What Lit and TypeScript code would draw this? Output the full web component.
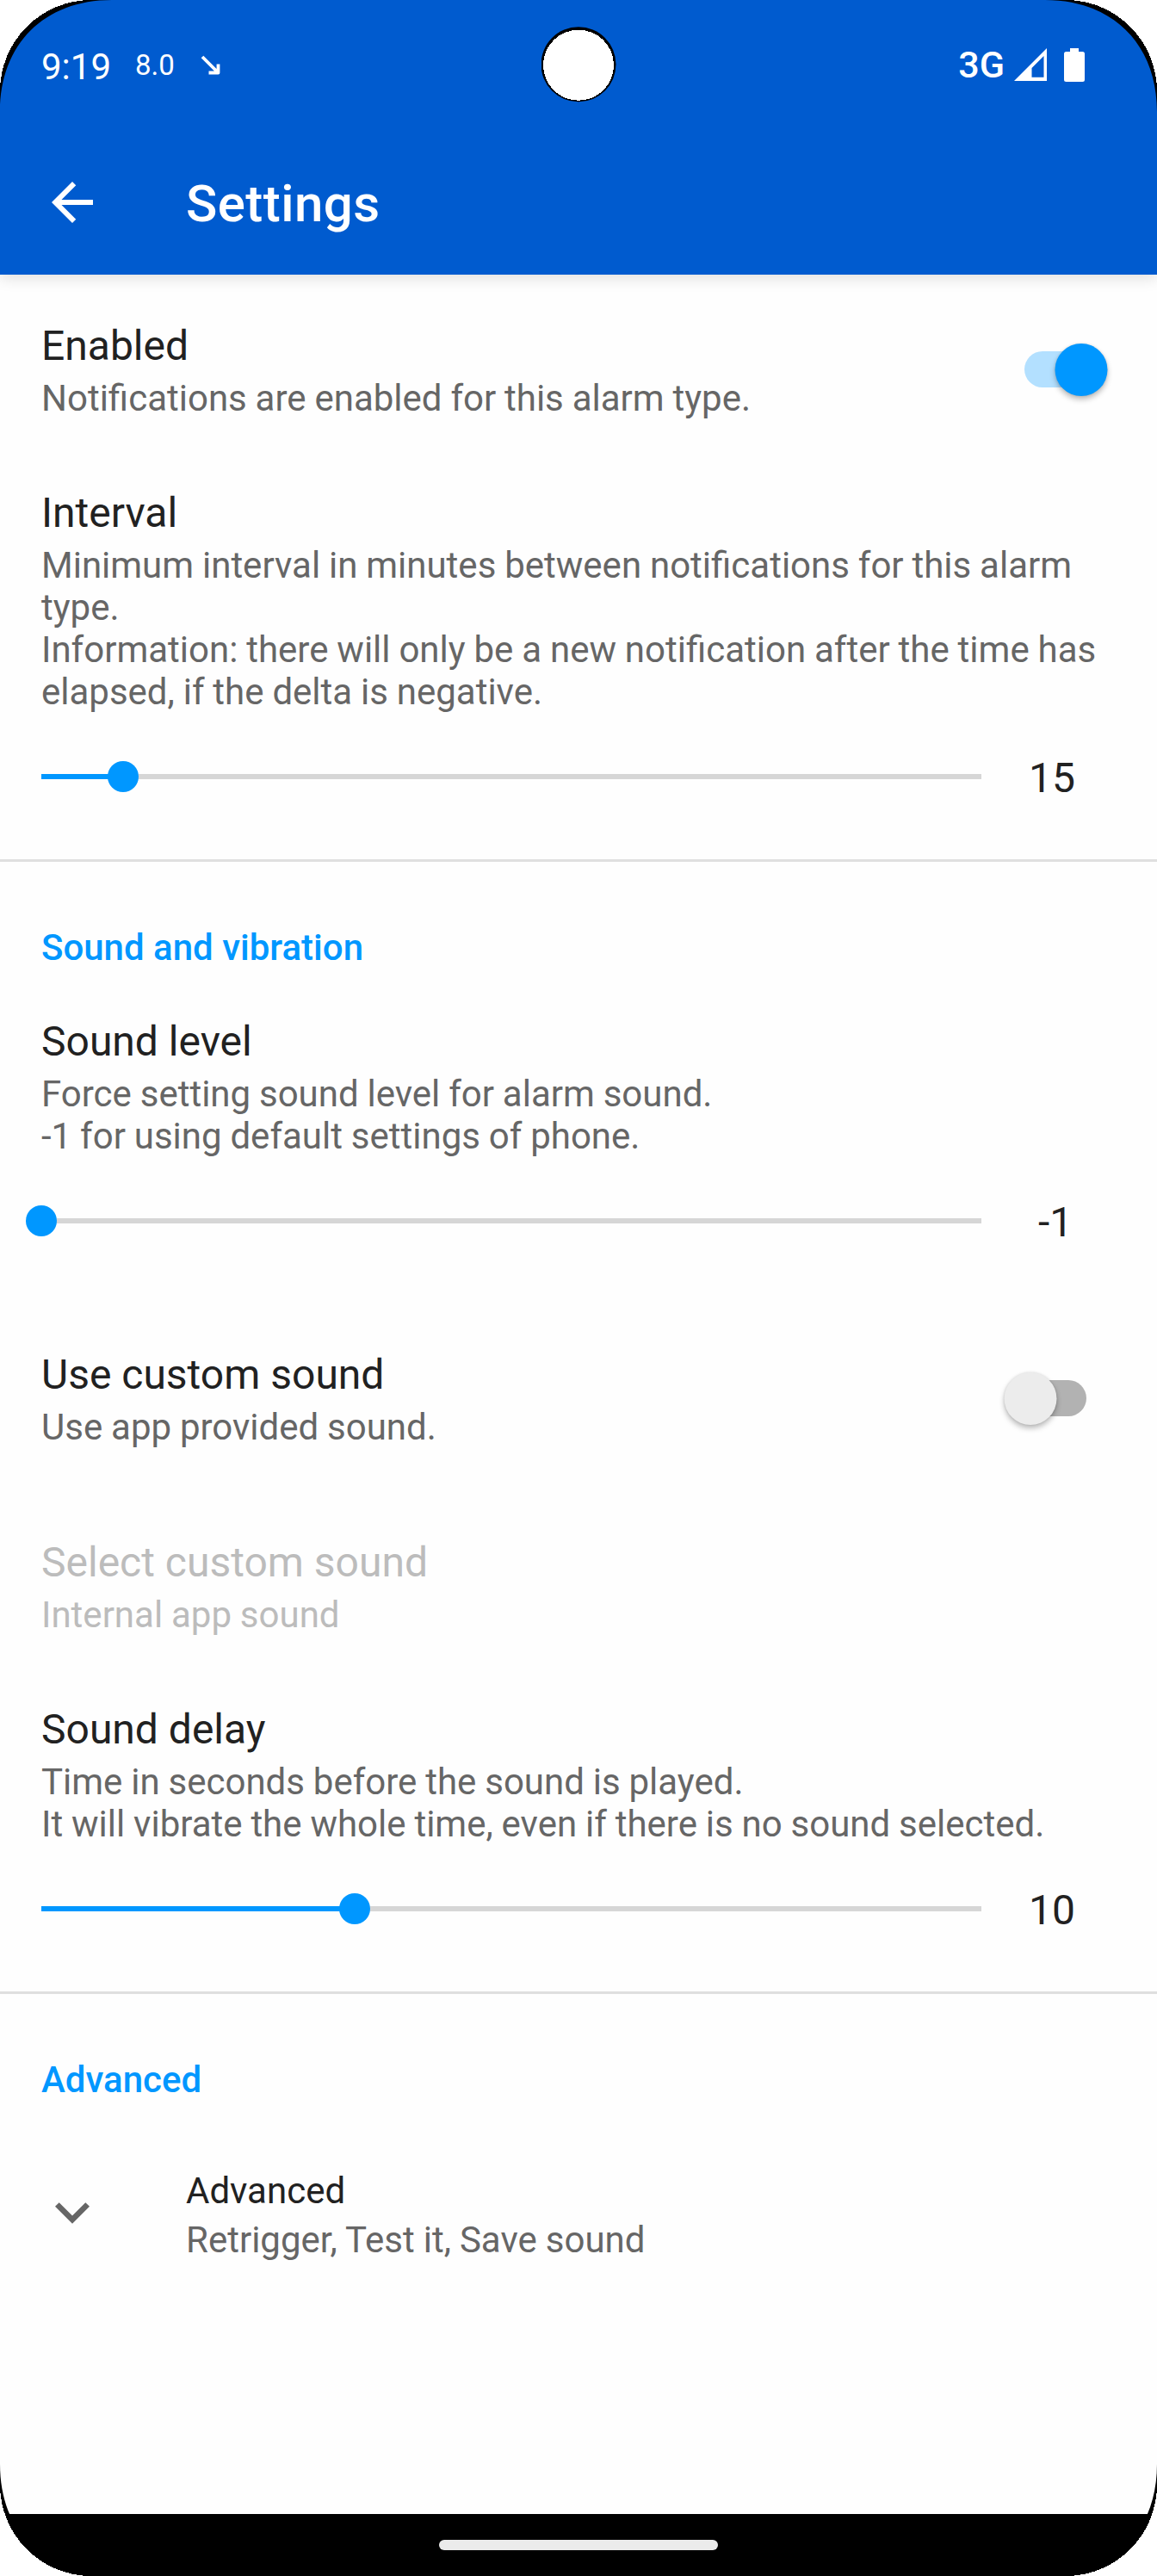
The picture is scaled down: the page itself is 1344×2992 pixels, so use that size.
import { LitElement, html, css } from "lit";
import { customElement, property } from "lit/decorators.js";
import { classMap } from "lit/directives/class-map.js";

@customElement("status-bar")
class StatusBar extends LitElement {
  static styles = css`
    :host { display: block; height: 151px; color: #fff; }
    .bar { box-sizing: border-box; height: 151px; padding: 0 84px 0 48px; display: flex; justify-content: space-between; }
    .side { display: flex; }
    .time { font-size: 42px; line-height: 49px; padding-top: 53px; width: 109px; }
    .num { font-size: 33px; line-height: 39px; padding-top: 56px; width: 76px; }
    .trend { padding-top: 64px; }
    .net { font-size: 43px; line-height: 49px; font-weight: 500; padding-top: 51px; margin-right: 11px; }
    .signal { padding-top: 56px; margin-right: 20px; }
    .battery { padding-top: 56px; }
    svg { display: block; }
  `;
  render() {
    return html`
      <div class="bar">
        <div class="side">
          <span class="time">9:19</span>
          <span class="num">8.0</span>
          <span class="trend">
            <svg width="24" height="24" viewBox="0 0 24 24" fill="none" stroke="#fff" stroke-width="3.8">
              <path d="M2 2 L20.5 20.5 M20.5 10.5 V20.5 H9.5" stroke-linejoin="round" />
            </svg>
          </span>
        </div>
        <div class="side">
          <span class="net">3G</span>
          <span class="signal">
            <svg width="38" height="38" viewBox="0 0 38 38">
              <path fill="#fff" fill-rule="evenodd" d="M38 0V38H0ZM34.5 9L20.5 23V33.8H34.5Z" />
            </svg>
          </span>
          <span class="battery">
            <svg width="24" height="39" viewBox="0 0 24 39">
              <path fill="#fff" d="M7 0H17V4H21.5Q24 4 24 6.500V36.500Q24 39 21.500 39H2.500Q0 39 0 36.500V6.500Q0 4 2.500 4H7Z" />
            </svg>
          </span>
        </div>
      </div>
    `;
  }
}

@customElement("top-bar")
class TopBar extends LitElement {
  static styles = css`
    :host { display: block; height: 168px; color: #fff; }
    .bar { display: flex; align-items: center; height: 168px; padding-left: 48px; }
    .back { width: 168px; display: flex; }
    .title { font-size: 60px; line-height: 70px; font-weight: 500; padding-top: 4px; letter-spacing: 0.45px; }
  `;
  render() {
    return html`
      <div class="bar">
        <div class="back">
          <svg width="72" height="72" viewBox="0 0 24 24">
            <path fill="#fff" d="M20 11H7.830l5.590-5.590L12 4l-8 8 8 8 1.410-1.410L7.830 13H20v-2z" />
          </svg>
        </div>
        <div class="title">Settings</div>
      </div>
    `;
  }
}

@customElement("toggle-switch")
class ToggleSwitch extends LitElement {
  @property({ type: Boolean, reflect: true }) on = false;
  static styles = css`
    :host { display: flex; align-items: center; justify-content: center; width: 72px; height: 42px; border-radius: 21px; background: #b2b2b2; }
    .thumb { flex: none; width: 61px; height: 61px; border-radius: 50%; background: #ececec; transform: translateX(-29.5px); box-shadow: 0 4px 6px rgba(0, 0, 0, 0.26), 0 0 3px rgba(0, 0, 0, 0.12); }
    :host([on]) { background: #b3e0ff; }
    :host([on]) .thumb { background: #0097ff; transform: translateX(29.5px); }
  `;
  render() {
    return html`<div class="thumb"></div>`;
  }
}

@customElement("value-slider")
class ValueSlider extends LitElement {
  @property({ type: Number }) value = 0;
  @property({ type: Number }) min = 0;
  @property({ type: Number }) max = 100;
  static styles = css`
    :host { display: flex; align-items: center; height: 148px; margin-bottom: 22px; }
    .track { display: flex; align-items: center; width: 1092px; height: 6px; background: #d6d6d6; }
    .fill { height: 6px; background: #0097ff; }
    .thumb { flex: none; width: 36px; height: 36px; margin-left: -18px; border-radius: 50%; background: #0097ff; }
    .value { box-sizing: border-box; width: 164px; text-align: center; font-size: 48px; line-height: 56px; color: #212121; padding-top: 3px; }
    .value.negative { padding-left: 8px; }
  `;
  render() {
    const pct = ((this.value - this.min) / (this.max - this.min)) * 100;
    return html`
      <div class="track">
        <div class="fill" style="width:${pct}%"></div>
        <div class="thumb"></div>
      </div>
      <div class=${classMap({ value: true, negative: this.value < 0 })}>${this.value}</div>
    `;
  }
}

@customElement("pref-row")
class PrefRow extends LitElement {
  @property() heading = "";
  @property({ attribute: false }) lines: string[] = [];
  @property({ type: Boolean, reflect: true }) disabled = false;
  static styles = css`
    :host { display: flex; align-items: center; justify-content: space-between; padding: 41px 82px 40px 0; }
    :host(.first) { padding-top: 55px; }
    :host(.custom) { padding-top: 55px; padding-bottom: 64px; }
    :host(.slider) { padding-bottom: 0; padding-right: 48px; }
    .heading { font-size: 48px; line-height: 56px; color: #212121; }
    .summary { margin-top: 8px; font-size: 42px; line-height: 49px; word-spacing: -0.55px; color: #666; }
    :host([disabled]) .heading, :host([disabled]) .summary { color: #bcbcbc; }
    ::slotted(*) { margin-bottom: 3px; }
  `;
  render() {
    return html`
      <div>
        <div class="heading">${this.heading}</div>
        <div class="summary">${this.lines.map((l) => html`<div>${l}</div>`)}</div>
      </div>
      <slot></slot>
    `;
  }
}

const corner = (cls: string) => html`
  <svg class="corner ${cls}" width="132" height="132" viewBox="0 0 132 132">
    <path fill="#000" d="M0 0H130C51.300 0 0 51.300 0 130Z" />
    <path fill="#fff" shape-rendering="crispEdges" d="M0 0H106A106 106 0 0 0 0 106Z" />
  </svg>
`;

@customElement("app-root")
class AppRoot extends LitElement {
  static styles = css`
    :host { display: block; font-family: Roboto, sans-serif; }
    .screen { position: relative; display: flex; flex-direction: column; width: 1344px; height: 2992px; background: #fefefe; overflow: hidden; }
    .header { flex: none; height: 319px; background: #005bcf; box-shadow: 0 4px 16px rgba(0, 0, 0, 0.13); }
    .content { flex: 1; }
    .section { padding-left: 48px; }
    .divider { height: 3px; background: #dfdfdf; }
    .category { padding: 75px 0 16px; font-size: 42px; line-height: 49px; font-weight: 500; color: #0097ff; }
    .more { display: flex; align-items: center; padding-top: 64px; }
    .chevron { width: 152px; padding-left: 16px; margin-bottom: 2px; }
    .more-title { font-size: 42px; line-height: 49px; color: #212121; }
    .more-summary { font-size: 42px; line-height: 49px; word-spacing: -0.4px; color: #666; margin-top: 8px; }
    .nav { flex: none; display: flex; justify-content: center; align-items: center; height: 72px; background: #000; }
    .pill { width: 324px; height: 12px; border-radius: 6px; background: #ebebeb; }
    .camera { position: absolute; left: 629px; top: 31px; }
    .corner { position: absolute; }
    .tl { left: 0; top: 0; }
    .tr { right: 0; top: 0; transform: scaleX(-1); }
    .bl { left: 0; bottom: 0; transform: scaleY(-1); }
    .br { right: 0; bottom: 0; transform: scale(-1, -1); }
  `;
  render() {
    return html`
      <div class="screen">
        <div class="header">
          <status-bar></status-bar>
          <top-bar></top-bar>
        </div>
        <div class="content">
          <div class="section">
            <pref-row class="first" heading="Enabled" .lines=${["Notifications are enabled for this alarm type."]}>
              <toggle-switch on></toggle-switch>
            </pref-row>
            <pref-row class="slider" heading="Interval" .lines=${[
              "Minimum interval in minutes between notifications for this alarm type.",
              "Information: there will only be a new notification after the time has elapsed, if the delta is negative.",
            ]}></pref-row>
            <value-slider value="15" min="5" max="120"></value-slider>
          </div>
          <div class="divider"></div>
          <div class="section">
            <div class="category">Sound and vibration</div>
            <pref-row class="slider" heading="Sound level" .lines=${[
              "Force setting sound level for alarm sound.",
              "-1 for using default settings of phone.",
            ]}></pref-row>
            <value-slider value="-1" min="-1" max="100"></value-slider>
            <pref-row class="custom" heading="Use custom sound" .lines=${["Use app provided sound."]}>
              <toggle-switch></toggle-switch>
            </pref-row>
            <pref-row disabled heading="Select custom sound" .lines=${["Internal app sound"]}></pref-row>
            <pref-row class="slider" heading="Sound delay" .lines=${[
              "Time in seconds before the sound is played.",
              "It will vibrate the whole time, even if there is no sound selected.",
            ]}></pref-row>
            <value-slider value="10" min="0" max="30"></value-slider>
          </div>
          <div class="divider"></div>
          <div class="section">
            <div class="category">Advanced</div>
            <div class="more">
              <div class="chevron">
                <svg width="40" height="25" viewBox="6 8.59 12 7.41">
                  <path fill="#666" d="M16.590 8.590L12 13.170 7.410 8.590 6 10l6 6 6-6z" />
                </svg>
              </div>
              <div>
                <div class="more-title">Advanced</div>
                <div class="more-summary">Retrigger, Test it, Save sound</div>
              </div>
            </div>
          </div>
        </div>
        <div class="nav"><div class="pill"></div></div>
        <svg class="camera" width="88" height="88" viewBox="0 0 88 88">
          <circle cx="43" cy="43.800" r="43.500" fill="#000" />
          <circle cx="43" cy="44.700" r="41" fill="#fff" shape-rendering="crispEdges" />
        </svg>
        ${corner("tl")} ${corner("tr")} ${corner("bl")} ${corner("br")}
      </div>
    `;
  }
}
